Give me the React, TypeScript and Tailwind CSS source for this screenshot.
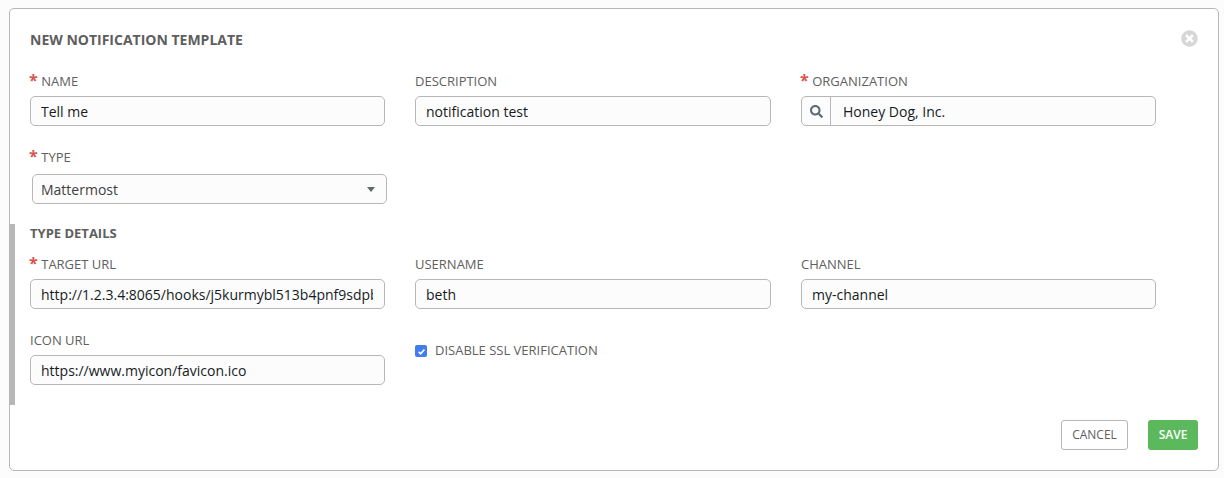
import { FaSearch, FaTimesCircle } from "react-icons/fa";

function Label({ text, required }: { text: string; required?: boolean }) {
  return (
    <div className="flex items-center h-[20px] pb-[2px] text-[13px] leading-[18px] text-[#606060]">
      {required && <span className="text-[#d9534f] font-bold text-[16px] leading-[16px] mr-[3.5px] -mt-[2px] -ml-[1px]">*</span>}
      <span>{text}</span>
    </div>
  );
}

function TextInput({ value }: { value: string }) {
  return (
    <input
      readOnly
      value={value}
      className="block w-full h-[30px] mt-[4px] pl-[10px] pr-[11px] bg-[#fcfcfc] border border-[#b7b7b7] rounded-[5px] text-[14px] text-[#161b1f] outline-none"
    />
  );
}

function Field({ label, value, required }: { label: string; value: string; required?: boolean }) {
  return (
    <div>
      <Label text={label} required={required} />
      <TextInput value={value} />
    </div>
  );
}

export default function App() {
  return (
    <div className="min-h-[478px] bg-[#fcfcfc] pl-[9px] pt-[8px] font-['Open_Sans',sans-serif]">
      <div className="relative w-[1210px] h-[463px] bg-white border border-[#b7b7b7] rounded-[5px] px-[20px] pt-[21px]">
        <div className="flex items-center justify-between h-[20px]">
          <h1 className="text-[14px] font-bold text-[#5e5e5e] leading-[20px]">NEW NOTIFICATION TEMPLATE</h1>
          <button className="absolute right-[20px] top-[21px] text-[#d7d7d7]">
            <FaTimesCircle size={17} />
          </button>
        </div>

        <div className="grid grid-cols-[355px_356px_355px] gap-x-[30px] mt-[22px]">
          <Field label="NAME" value="Tell me" required />
          <Field label="DESCRIPTION" value="notification test" />
          <div>
            <Label text="ORGANIZATION" required />
            <div className="flex h-[30px] mt-[4px] bg-[#fcfcfc] border border-[#b7b7b7] rounded-[5px]">
              <div className="flex items-center justify-center w-[29px] border-r border-[#b7b7b7] text-[#606873] shrink-0">
                <FaSearch size={13} />
              </div>
              <input
                readOnly
                value="Honey Dog, Inc."
                className="flex-1 min-w-0 bg-transparent pl-[12px] pr-[11px] text-[14px] text-[#161b1f] outline-none"
              />
            </div>
          </div>
        </div>

        <div className="mt-[22px]">
          <Label text="TYPE" required />
          <div className="flex items-center justify-between w-[355px] h-[30px] mt-[6px] ml-[2px] pl-[8px] pr-[11px] bg-[#fcfcfc] border border-[#b7b7b7] rounded-[5px] text-[14px] text-[#3f3f3f]">
            <span>Mattermost</span>
            <svg width="8" height="5" viewBox="0 0 8 5" className="text-[#606873]">
              <path d="M0 0h8L4 5z" fill="currentColor" />
            </svg>
          </div>
        </div>

        <section className="-ml-[21px] mt-[20px] pl-[15px] border-l-[6px] border-[#b7b7b7] h-[181px]">
          <h2 className="h-[20px] pb-[2px] text-[13px] font-bold text-[#5e5e5e] leading-[18px]">TYPE DETAILS</h2>
          <div className="grid grid-cols-[355px_356px_355px] gap-x-[30px] mt-[11px]">
            <Field label="TARGET URL" value="http://1.2.3.4:8065/hooks/j5kurmybl513b4pnf9sdpbxkqwe" required />
            <Field label="USERNAME" value="beth" />
            <Field label="CHANNEL" value="my-channel" />
          </div>
          <div className="grid grid-cols-[355px_356px_355px] gap-x-[30px] mt-[22px]">
            <Field label="ICON URL" value="https://www.myicon/favicon.ico" />
            <label className="flex items-center h-[20px] pt-[20px] text-[13px] text-[#606060]">
              <span className="flex items-center justify-center w-[12px] h-[12px] rounded-[2px] bg-[#437ceb] mr-[8px]">
                <svg width="9" height="9" viewBox="0 0 9 9">
                  <path d="M1.6 4.8l2 2 3.8-4.4" fill="none" stroke="white" strokeWidth="1.6" />
                </svg>
              </span>
              DISABLE SSL VERIFICATION
            </label>
          </div>
        </section>

        <div className="flex justify-end gap-[20px] mt-[15px]">
          <button className="w-[67px] h-[30px] bg-white border border-[#b7b7b7] rounded-[3px] text-[12px] text-[#5e5e5e]">CANCEL</button>
          <button className="w-[50px] h-[30px] bg-[#5cb85c] rounded-[3px] text-[12px] font-semibold text-white">SAVE</button>
        </div>
      </div>
    </div>
  );
}
